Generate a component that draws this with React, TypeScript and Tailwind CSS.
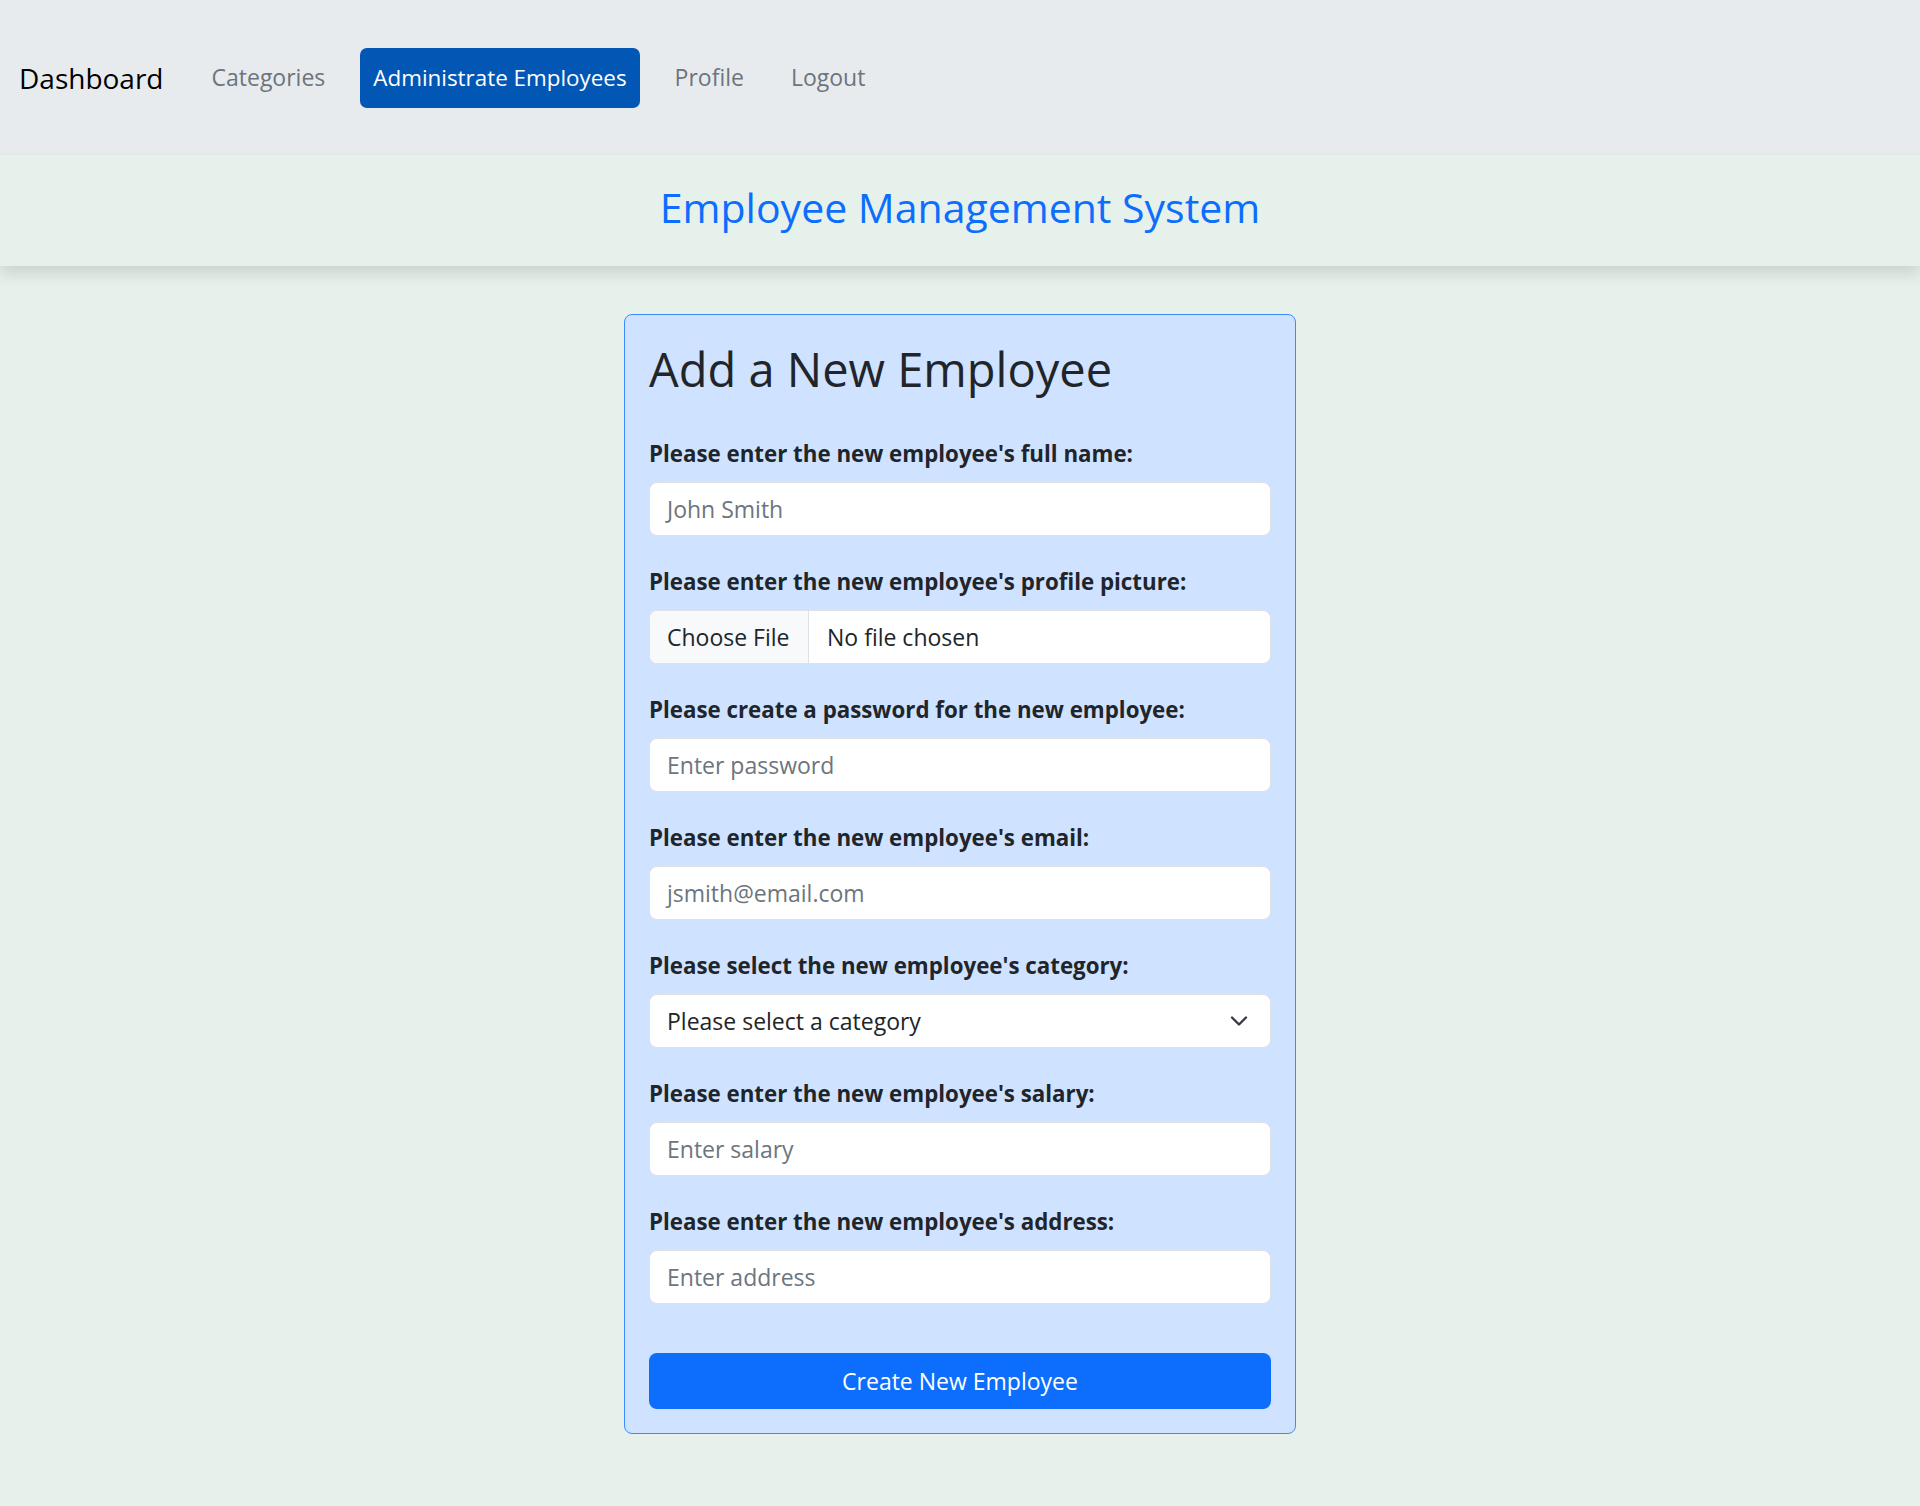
import { ChevronDown } from "lucide-react";

type Field = {
  label: string;
  kind: "text" | "file" | "select";
  placeholder?: string;
};

const fields: Field[] = [
  { label: "Please enter the new employee's full name:", kind: "text", placeholder: "John Smith" },
  { label: "Please enter the new employee's profile picture:", kind: "file" },
  { label: "Please create a password for the new employee:", kind: "text", placeholder: "Enter password" },
  { label: "Please enter the new employee's email:", kind: "text", placeholder: "jsmith@email.com" },
  { label: "Please select the new employee's category:", kind: "select" },
  { label: "Please enter the new employee's salary:", kind: "text", placeholder: "Enter salary" },
  { label: "Please enter the new employee's address:", kind: "text", placeholder: "Enter address" },
];

const navLinks = ["Categories", "Administrate Employees", "Profile", "Logout"];

const FieldControl = ({ field }: { field: Field }) => {
  if (field.kind === "file") {
    return (
      <div className="flex h-[54px] items-stretch overflow-hidden rounded-[8px] border border-[#dee2e6] bg-white text-[23px] text-[#212529]">
        <div className="flex w-[159px] items-center border-r border-[#dee2e6] bg-[#f8f9fa] px-[17px]">
          Choose File
        </div>
        <div className="flex items-center px-[18px]">No file chosen</div>
      </div>
    );
  }
  if (field.kind === "select") {
    return (
      <div className="flex h-[54px] items-center justify-between rounded-[8px] border border-[#dee2e6] bg-white pl-[17px] pr-[17px] text-[23px] text-[#212529]">
        <span>Please select a category</span>
        <ChevronDown className="h-[28px] w-[28px] text-[#343a40]" strokeWidth={2} />
      </div>
    );
  }
  return (
    <div className="flex h-[54px] items-center rounded-[8px] border border-[#dee2e6] bg-white px-[17px] text-[23px] text-[#6c757d]">
      {field.placeholder}
    </div>
  );
};

const App = () => {
  return (
    <div className="min-h-[1506px] bg-[#e7f1ec] font-['Open_Sans',sans-serif]">
      {/* NAVBAR */}
      <nav className="flex h-[155px] items-center bg-[#e8ebee] pl-[19px]">
        <span className="mr-[36px] text-[28px] text-black">Dashboard</span>
        <div className="flex items-center gap-[23px]">
          {navLinks.map((link) => (
            <span
              key={link}
              className={
                link === "Administrate Employees"
                  ? "flex h-[60px] items-center rounded-[7px] bg-[#0256b4] px-[13px] text-[22.4px] text-white"
                  : "flex h-[60px] items-center px-[12px] text-[23px] text-[#6c757d]"
              }
            >
              {link}
            </span>
          ))}
        </div>
      </nav>
      {/* TITLE BAND */}
      <header className="relative flex h-[111px] items-center justify-center bg-[#e7f1ec] pb-[6px] shadow-[0_8px_14px_rgba(0,0,0,0.12)]">
        <h1 className="text-[41px] font-medium text-[#0d6efd]">Employee Management System</h1>
      </header>
      {/* FORM CARD */}
      <div className="flex justify-center pt-[48px]">
        <div className="w-[672px] rounded-[8px] border border-[#3d8bfd] bg-[#cfe2ff] p-[24px]">
          <h2 className="mb-[37px] h-[60px] text-[47px] leading-[60px] font-medium text-[#212529]">
            Add a New Employee
          </h2>
          {fields.map((field) => (
            <div key={field.label} className="mb-[28px]">
              <div className="mb-[10px] text-[22.3px] leading-[36px] font-bold text-[#212529]">{field.label}</div>
              <FieldControl field={field} />
            </div>
          ))}
          <button className="mt-[49px] flex h-[56px] w-full items-center justify-center rounded-[8px] bg-[#0d6efd] text-[23px] text-white">
            Create New Employee
          </button>
        </div>
      </div>
    </div>
  );
};

export default App;
